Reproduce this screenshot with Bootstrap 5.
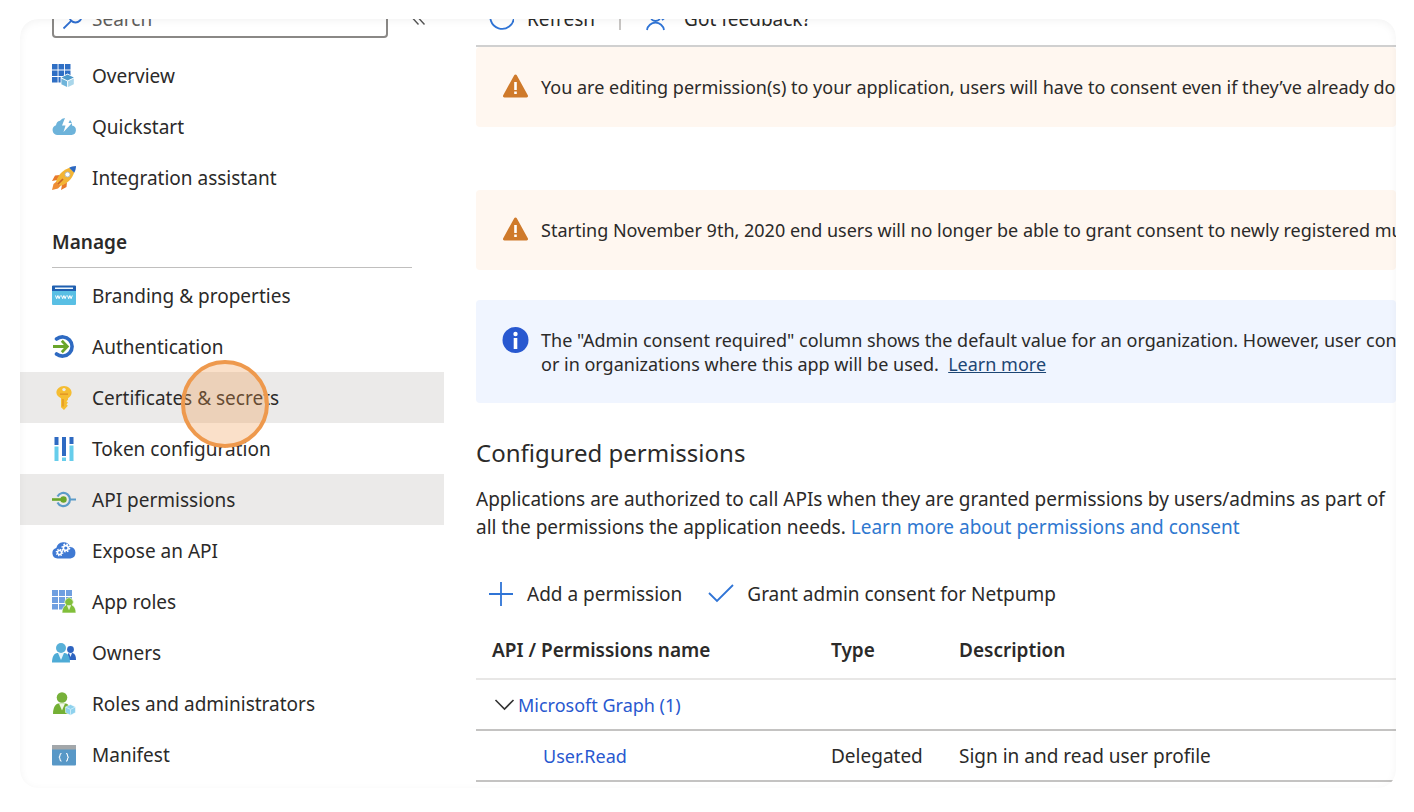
<!DOCTYPE html>
<html lang="en">
<head>
<meta charset="utf-8">
<meta name="viewport" content="width=device-width, initial-scale=1">
<title>API permissions</title>
<link href="https://cdn.jsdelivr.net/npm/bootstrap@5.3.0/dist/css/bootstrap.min.css" rel="stylesheet">
<style>
  body { font-family: "Noto Sans", "Open Sans", sans-serif; font-size: 19px; line-height: 28px; color: #2b2a29; background: #fff; }
  button, input { font: inherit; color: inherit; }
  .page-frame { padding: 19px 18px 24px 20px; }
  .blade { border-radius: 18px; overflow: hidden; position: relative; background: #fff; padding-bottom: 6px; }
  .blade::after { content: ""; position: absolute; inset: 0; border-radius: inherit; pointer-events: none; box-shadow: inset 0 2px 8px rgba(0,0,0,.05); }
  .scrolled-row { height: 38px; margin-top: -19px; }
  .side-menu { width: 424px; }
  .search-wrap { width: 336px; height: 38px; border: 2px solid #8a8886; border-radius: 4px; padding-left: 8px; }
  .search-wrap input { border: 0; outline: 0; background: transparent; min-width: 0; padding: 0; }
  .search-wrap input::placeholder { color: #605e5c; opacity: 1; }
  .menu-item { height: 51px; padding-left: 32px; gap: 16px; color: inherit; text-decoration: none; position: relative; }
  .menu-item.shaded { background: #ebeae9; }
  .menu-title { font-size: 19px; font-weight: 600; line-height: 28px; margin: 25px 32px 2px; padding-bottom: 11px; border-bottom: 1px solid #c0bfbe; }
  .click-spot { position: absolute; z-index: 2; left: 161px; top: -12px; width: 88px; height: 88px; border: 4px solid #ee994d; border-radius: 50%; background: rgba(238,153,77,.3); }
  .content-col { padding-left: 32px; min-width: 0; }
  .tool-row { border-bottom: 2px solid #d0d0d0; padding-bottom: 7px; }
  .cmd { border: 0; background: none; padding: 0; gap: 13px; }
  .rule { width: 2px; height: 22px; background: #c8c6c4; }
  .notice { padding: 26px; gap: 12px; font-size: 18px; line-height: 24px; white-space: nowrap; border-radius: 4px; }
  .notice p { padding-top: 2px; }
  .notice.warn { background: #fff7f0; height: 80px; }
  .notice.warn + .notice.warn { margin: 63px 0 30px; }
  .notice.info { background: #f0f5ff; height: 103px; }
  .notice a { color: #1d4674; }
  .section-title { font-size: 24px; line-height: 32px; font-weight: 400; margin: 34px 0 0; }
  .body-text { margin: 16px 0 39px; white-space: nowrap; }
  .body-text a { color: #2f78d0; text-decoration: none; }
  .commands { gap: 26px; padding-left: 12px; }
  .perm-table { table-layout: fixed; width: 100%; margin-top: 14px; white-space: nowrap; }
  .perm-table th { font-weight: 600; height: 57px; border-bottom: 2px solid #e8e7e6; }
  .perm-table td { height: 51px; border-bottom: 2px solid #c4c3c2; }
  .perm-table th, .perm-table td { padding: 0; }
  .perm-table th:first-child { padding-left: 16px; }
  .c-name { width: 355px; } .c-type { width: 128px; }
  .perm-table a, .perm-table button { color: #2858cf; text-decoration: none; font-size: 18px; }
  .perm-table .leaf { padding-left: 67px; }
  .twist { border: 0; background: none; padding: 0 0 0 18px; gap: 2px; }
</style>
</head>
<body>
<div class="page-frame">
<div class="blade d-flex">
  <nav class="side-menu flex-shrink-0" aria-label="Application menu">
    <div class="scrolled-row d-flex align-items-center ps-4 ms-2">
      <label class="search-wrap d-flex align-items-center gap-2">
        <svg width="22" height="22" viewBox="0 0 22 22" fill="none" stroke="#2f6fd0" stroke-width="1.800"><circle cx="13.500" cy="8.500" r="6"/><path d="M9.200 12.800 1.500 20.500"/></svg>
        <input class="flex-grow-1" type="text" placeholder="Search" aria-label="Search">
      </label>
      <button class="cmd ms-4" aria-label="Collapse menu"><svg width="14" height="18" viewBox="0 0 14 18" fill="none" stroke="#555" stroke-width="1.400"><path d="M6.500 1 1 6.500l5.500 6M12.500 1 7 6.500l5.500 6"/></svg></button>
    </div>
    <div class="pt-2 mt-1">
      <a class="menu-item d-flex align-items-center" href="#"><svg width="24" height="24" viewBox="0 0 24 24"><path fill="#2f6fc4" d="M0 0h5.600v5.600H0zM6.500 0h5.600v5.600H6.500zM13 0h5.500v5.600H13zM0 6.500h5.600v5.600H0zM6.500 6.500h5.600v5.600H6.500zM13 6.500h5.500v5.600H13zM0 13h5.600v5.600H0zM6.500 13h5.600v5.600H6.500z"/><path fill="#fff" d="m15.600 9.500 7 3.700v7.400l-7 3.400-7-3.400v-7.400z"/><path fill="#4f9bcb" d="m15.600 10.600 6.200 3-6.200 2.900-6.200-2.900z"/><path fill="#6fb4da" d="m9.400 14.500 5.700 2.700V23l-5.700-2.700z"/><path fill="#a9d6ea" d="m21.800 14.500-5.700 2.700V23l5.700-2.700z"/></svg>Overview</a>
      <a class="menu-item d-flex align-items-center" href="#"><svg width="24" height="24" viewBox="0 0 24 24"><path fill="#6db3da" d="M5 20a5 5 0 0 1-1-9.700A5.200 5.200 0 0 1 8 5.700 6.500 6.500 0 0 1 18.500 5.500 7 7 0 0 1 20 10.500 4.800 4.800 0 0 1 19.500 20z"/><path fill="#fff" d="M13 3h6l-2.500 5H20l-8.500 9 2-6.500H10z"/></svg>Quickstart</a>
      <a class="menu-item d-flex align-items-center" href="#"><svg width="24" height="24" viewBox="0 0 24 24"><path fill="#e8792b" d="M8 9 3 9.500 0 15l5-1zM15 16l-.5 5L9 24l1-5z"/><path fill="#ee8d35" d="M4.500 15.500 1.500 18 0 24l6-1.500 3-3z"/><path fill="#f3b535" d="M17.500 1.800C11 4 6.500 8.500 4 15.500L8.500 20c7-2.500 11.500-7 13.700-13.500z"/><path fill="#2c67c0" d="M24 0c-2.800.1-5 .8-6.800 1.800l5 5C23.300 5 23.900 2.700 24 0z"/><circle cx="15.500" cy="8.500" r="2.500" fill="#fff" stroke="#9fb5c8" stroke-width=".8"/><path stroke="#c9652a" stroke-width="1.700" d="m6 18 5-5"/></svg>Integration assistant</a>
    </div>
    <h2 class="menu-title">Manage</h2>
    <div>
      <a class="menu-item d-flex align-items-center" href="#"><svg width="24" height="24" viewBox="0 0 24 24"><rect x="0" y="2" width="24" height="19" rx="1" fill="#59bfe4"/><path fill="#1f5fb0" d="M1 1.500h22a1 1 0 0 1 1 1V7H0V2.500a1 1 0 0 1 1-1z"/><path fill="#eef7fd" d="M3 3.500h18v1.500H3z"/><path d="m3.500 11.500 1.200 3.200 1.200-3.200 1.200 3.200 1.200-3.200m1.200 0 1.200 3.200 1.200-3.200 1.200 3.200 1.200-3.200m1.200 0 1.200 3.200 1.200-3.200 1.200 3.200 1.200-3.200" fill="none" stroke="#fff" stroke-width="1"/></svg>Branding &amp; properties</a>
      <a class="menu-item d-flex align-items-center" href="#"><svg width="24" height="24" viewBox="0 0 24 24" fill="none"><path stroke="#2e6ac2" stroke-width="3.600" stroke-linecap="round" d="M4.500 4A9.600 9.600 0 1 1 4.500 19"/><path stroke="#6aa52b" stroke-width="2.800" d="M1 11.500h14M9.800 5.800l5.500 5.700-5.500 5.700"/></svg>Authentication</a>
      <a class="menu-item shaded d-flex align-items-center" href="#"><svg width="24" height="24" viewBox="0 0 24 24"><path fill="#f5bd32" d="M12 0c4.300 0 7.600 3 7.600 6.600 0 2.300-1.300 4.300-3.600 5.700v1.500l-1.500 1.400 1.500 1.500-1.500 1.600 1.300 1.500L12 24l-3-2.800V12.300C6.200 11 4.400 9 4.400 6.600 4.400 3 7.700 0 12 0z"/><circle cx="12" cy="3.600" r="1.700" fill="#ebeae9"/><path stroke="#df8f22" stroke-width="1.200" d="M8 8.200h8M11 13v7.500"/></svg>Certificates &amp; secrets<span class="click-spot"></span></a>
      <a class="menu-item d-flex align-items-center" href="#"><svg width="24" height="26" viewBox="0 0 24 26"><path fill="#2e6ac2" d="M2.500 1h4v8h-4zM10 1h4v19h-4zM17.500 1h4v7h-4z"/><path fill="#66cdeb" d="M2.500 10.500h4V25h-4zM10 21.500h4V25h-4zM17.500 9.500h4V25h-4z"/></svg>Token configuration</a>
      <a class="menu-item shaded d-flex align-items-center" href="#"><svg width="24" height="24" viewBox="0 0 24 24" fill="none"><path stroke="#5b9bc9" stroke-width="2.200" d="M5.500 8.500a6.600 6.600 0 1 1 0 6M18 11.500h6"/><path stroke="#6aa52b" stroke-width="2.600" d="M0 11.500h10"/><circle cx="11.500" cy="11.500" r="3.200" fill="#6aa52b"/></svg>API permissions</a>
      <a class="menu-item d-flex align-items-center" href="#"><svg width="24" height="24" viewBox="0 0 24 24"><path fill="#3f79d3" d="M5.500 19.500a5.300 5.300 0 0 1-1.200-10.400A7.300 7.300 0 0 1 18.300 8a5.800 5.800 0 0 1 .2 11.500z"/><g fill="none" stroke="#fff"><circle cx="7.500" cy="13.500" r="2" stroke-width="1.500"/><circle cx="7.500" cy="13.500" r="3.200" stroke-width="1.300" stroke-dasharray="1.300 1.200"/><circle cx="13.800" cy="9" r="2.400" stroke-width="1.600"/><circle cx="13.800" cy="9" r="3.800" stroke-width="1.400" stroke-dasharray="1.600 1.400"/></g></svg>Expose an API</a>
      <a class="menu-item d-flex align-items-center" href="#"><svg width="24" height="24" viewBox="0 0 24 24"><path fill="#6f9fe0" d="M0 0h6v6H0zM7 0h6v6H7zM14 0h6v6h-6zM0 7h6v6H0zM7 7h6v6H7zM14 7h6v6h-6zM0 14h6v5.500H0zM7 14h6v5.500H7z"/><path fill="#81bf3a" stroke="#fff" stroke-width=".6" d="M10 23c0-4 1.500-7 4-8a4.200 4.200 0 1 1 6 0c2.500 1 4 4 4 8z"/><path fill="#e5f3d3" d="m14.800 15.300 2.200 5 2.200-5z"/></svg>App roles</a>
      <a class="menu-item d-flex align-items-center" href="#"><svg width="24" height="24" viewBox="0 0 24 24"><circle cx="18.500" cy="8.500" r="3.400" fill="#2c63c0"/><path fill="#2c63c0" d="M14 19h10c0-4-1-6.500-3.500-7h-4z"/><path fill="#e8f2fb" d="m17 12 1.500 4 1.500-4z"/><circle cx="9" cy="7" r="5" fill="#58b0d8"/><path fill="#4eabd6" d="M0 21.500C0 16 2 12 5.500 12h7c3.500 0 5.500 4 5.500 9.500z"/><path fill="#e8f5fb" d="m6 12 3 7 3-7z"/></svg>Owners</a>
      <a class="menu-item d-flex align-items-center" href="#"><svg width="24" height="24" viewBox="0 0 24 24"><circle cx="10" cy="5.500" r="5.300" fill="#77b13a"/><path fill="#74b035" d="M1 22c0-6 2-10 5.500-10.500h7C17 12 19 16 19 22z"/><path fill="#eff8e3" d="m7 11.500 3 7 3-7z"/><path fill="#8fd2ee" stroke="#fff" stroke-width=".5" d="m18.500 12.500 5 2.400v5.700l-5 2.700-5-2.700v-5.700z"/><path fill="none" stroke="#c9ebf8" d="m14 15.200 4.500 2.200 4.500-2.200m-4.500 2.200V23"/></svg>Roles and administrators</a>
      <a class="menu-item d-flex align-items-center" href="#"><svg width="24" height="24" viewBox="0 0 24 24"><rect y="2" width="24" height="20.500" rx="1" fill="#5898c7"/><path fill="#a3a7aa" d="M1 2h22a1 1 0 0 1 1 1v3.500H0V3a1 1 0 0 1 1-1z"/><path fill="none" stroke="#fff" stroke-width="1.100" d="M9.500 10.500c-1.500 0-1.500.7-1.500 1.800s0 1.900-1.200 2c1.200.1 1.200 1 1.200 2s0 1.900 1.500 1.900M14 10.500c1.500 0 1.500.7 1.500 1.800s0 1.900 1.200 2c-1.200.1-1.200 1-1.200 2s0 1.900-1.500 1.900"/></svg>Manifest</a>
    </div>
  </nav>

  <main class="content-col flex-grow-1">
    <div class="tool-row">
      <div class="scrolled-row d-flex align-items-center">
        <button class="cmd d-flex align-items-center ms-2 ps-1"><svg width="26" height="26" viewBox="0 0 26 26" fill="none" stroke="#2f74d6" stroke-width="1.800"><path d="M21 1.500a11.800 11.800 0 1 1-7-2.200"/></svg>Refresh</button>
        <span class="rule ms-4"></span>
        <button class="cmd d-flex align-items-center ms-4"><svg width="26" height="26" viewBox="0 0 26 26" fill="none" stroke="#2f74d6" stroke-width="1.800"><circle cx="10.500" cy="10" r="5"/><path d="M2 24a8.600 8.600 0 0 1 17 0M17 14l5-4V2"/></svg>Got feedback?</button>
      </div>
    </div>
    <div class="notice warn d-flex">
      <svg class="flex-shrink-0" width="27" height="26" viewBox="0 0 27 26"><path fill="#cf7a2b" d="M12.200 2.200a1.500 1.500 0 0 1 2.600 0l11 20a1.500 1.500 0 0 1-1.300 2.300h-22a1.500 1.500 0 0 1-1.300-2.300z"/><path fill="#fff" d="M12.200 9h2.600v8h-2.600zM12.200 18.500h2.600v2.600h-2.600z"/></svg>
      <p class="m-0">You are editing permission(s) to your application, users will have to consent even if they’ve already done</p>
    </div>
    <div class="notice warn d-flex">
      <svg class="flex-shrink-0" width="27" height="26" viewBox="0 0 27 26"><path fill="#cf7a2b" d="M12.200 2.200a1.500 1.500 0 0 1 2.600 0l11 20a1.500 1.500 0 0 1-1.300 2.300h-22a1.500 1.500 0 0 1-1.300-2.300z"/><path fill="#fff" d="M12.200 9h2.600v8h-2.600zM12.200 18.500h2.600v2.600h-2.600z"/></svg>
      <p class="m-0">Starting November 9th, 2020 end users will no longer be able to grant consent to newly registered multitenant</p>
    </div>
    <div class="notice info d-flex">
      <svg class="flex-shrink-0" width="27" height="28" viewBox="0 0 27 28"><circle cx="13.500" cy="14" r="13" fill="#2858d0"/><circle cx="13.500" cy="8" r="2.200" fill="#fff"/><path fill="#fff" d="M11.700 12h3.600v11h-3.600z"/></svg>
      <p class="m-0">The "Admin consent required" column shows the default value for an organization. However, user consent<br>or in organizations where this app will be used. &nbsp;<a href="#">Learn more</a></p>
    </div>
    <h1 class="section-title">Configured permissions</h1>
    <p class="body-text">Applications are authorized to call APIs when they are granted permissions by users/admins as part of<br>all the permissions the application needs. <a href="#">Learn more about permissions and consent</a></p>
    <div class="commands d-flex align-items-center">
      <button class="cmd d-flex align-items-center"><svg width="26" height="26" viewBox="0 0 26 26" fill="none" stroke="#2f74d6" stroke-width="1.800"><path d="M13 1v24M1 13h24"/></svg>Add a permission</button>
      <button class="cmd d-flex align-items-center"><svg width="26" height="26" viewBox="0 0 26 26" fill="none" stroke="#2f74d6" stroke-width="1.800"><path d="m1 12 8 8L25 4"/></svg>Grant admin consent for Netpump</button>
    </div>
    <table class="perm-table">
      <colgroup><col class="c-name"><col class="c-type"><col></colgroup>
      <thead><tr><th scope="col">API / Permissions name</th><th scope="col">Type</th><th scope="col">Description</th></tr></thead>
      <tbody>
        <tr><td colspan="3"><button class="twist d-flex align-items-center"><svg width="22" height="20" viewBox="0 0 22 20" fill="none" stroke="#333" stroke-width="1.600"><path d="m1.500 5 9 9 9-9"/></svg>Microsoft Graph (1)</button></td></tr>
        <tr><td class="leaf"><a href="#">User.Read</a></td><td>Delegated</td><td>Sign in and read user profile</td></tr>
      </tbody>
    </table>
  </main>
</div>
</div>
<script src="https://cdn.jsdelivr.net/npm/bootstrap@5.3.0/dist/js/bootstrap.bundle.min.js"></script>
</body>
</html>
